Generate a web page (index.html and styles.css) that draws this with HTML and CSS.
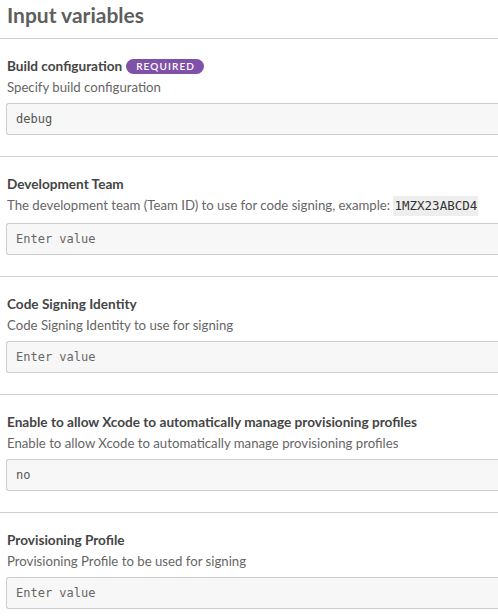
FILE: index.html
```html
<!DOCTYPE html>
<html>
<head>
<meta charset="utf-8">
<link rel="stylesheet" href="styles.css">
</head>
<body>
<div class="page">
  <div class="header"><h1 class="title">Input variables</h1></div>

  <div class="section">
    <div class="label">Build configuration <span class="badge">REQUIRED</span></div>
    <div class="desc">Specify build configuration</div>
    <div class="field value">debug</div>
  </div>

  <div class="section">
    <div class="label">Development Team</div>
    <div class="desc">The development team (Team ID) to use for code signing, example: <code class="code">1MZX23ABCD4</code></div>
    <div class="field placeholder">Enter value</div>
  </div>

  <div class="section">
    <div class="label">Code Signing Identity</div>
    <div class="desc">Code Signing Identity to use for signing</div>
    <div class="field placeholder">Enter value</div>
  </div>

  <div class="section">
    <div class="label">Enable to allow Xcode to automatically manage provisioning profiles</div>
    <div class="desc">Enable to allow Xcode to automatically manage provisioning profiles</div>
    <div class="field value">no</div>
  </div>

  <div class="section last">
    <div class="label">Provisioning Profile</div>
    <div class="desc">Provisioning Profile to be used for signing</div>
    <div class="field placeholder">Enter value</div>
  </div>
</div>
</body>
</html>
```
FILE: styles.css
```css
html, body {
  margin: 0;
  padding: 0;
  background: #fff;
  overflow: hidden;
}
.page {
  font-family: Lato, "Noto Sans", sans-serif;
  width: 498px;
}
.header {
  padding: 0 7px 8px;
  border-bottom: 1px solid #cfcfcf;
}
.title {
  margin: 0;
  font-size: 21px;
  line-height: 30px;
  font-weight: 700;
  color: #5e5e5e;
}
.section {
  padding: 18px 0 21px 6px;
  border-bottom: 1px solid #cfcfcf;
}
.section.last {
  border-bottom: none;
}
.label {
  padding-left: 1px;
  font-size: 13.6px;
  line-height: 18px;
  font-weight: 700;
  color: #454545;
  display: flex;
  align-items: center;
  gap: 4px;
  white-space: nowrap;
}
.badge {
  display: inline-block;
  background: #8051a8;
  color: #fff;
  font-size: 10px;
  font-weight: 600;
  letter-spacing: 1.1px;
  line-height: 15px;
  height: 15px;
  padding: 0 9px 0 10px;
  border-radius: 8px;
}
.desc {
  margin-top: 3px;
  padding-left: 1px;
  font-size: 13.2px;
  line-height: 18px;
  color: #666;
  white-space: nowrap;
}
.code {
  display: inline-block;
  font-family: "DejaVu Sans Mono", monospace;
  font-size: 12.5px;
  line-height: 20px;
  background: #eee;
  color: #333;
  padding: 0 1px;
}
.field {
  margin-top: 7px;
  height: 30px;
  border: 1px solid #ccc;
  border-right: none;
  border-radius: 3px 0 0 3px;
  background: #f7f7f7;
  padding: 0 9px;
  font-family: "DejaVu Sans Mono", monospace;
  font-size: 12px;
  line-height: 30px;
}
.value {
  color: #555;
}
.placeholder {
  color: #666;
}
```
